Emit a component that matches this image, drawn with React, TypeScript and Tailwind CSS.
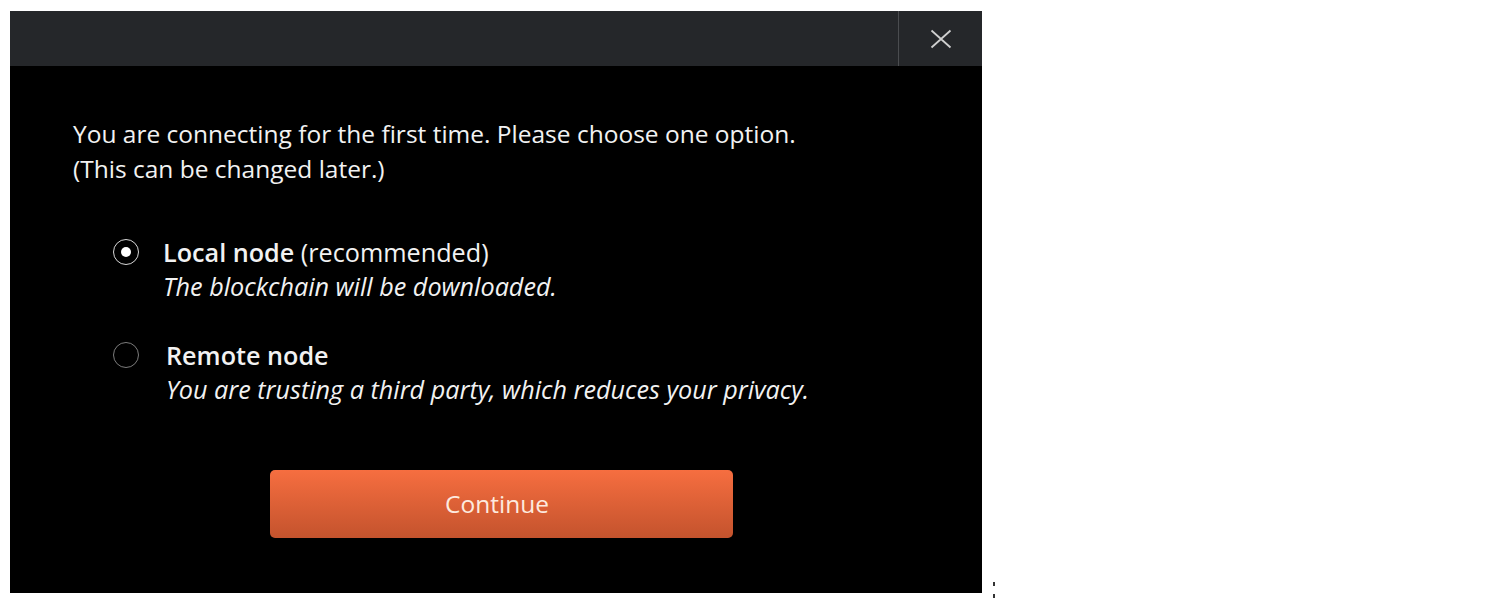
const font = { fontFamily: '"Open Sans", "Noto Sans", sans-serif' };

function Radio({ checked }: { checked: boolean }) {
  return (
    <span
      className={`flex h-[26px] w-[26px] shrink-0 items-center justify-center rounded-full border-[1.5px] ${
        checked ? "border-[#d8d8d8]" : "border-[#7c7c7c]"
      }`}
    >
      {checked && <span className="h-[10px] w-[10px] rounded-full bg-white" />}
    </span>
  );
}

export default function App() {
  return (
    <div className="flex min-h-screen items-start bg-white pl-[10px] pt-[11px]" style={font}>
      {/* Dialog */}
      <div className="flex h-[582px] w-[972px] flex-col bg-black text-[#f2f2f2]">
        {/* Title bar */}
        <div className="flex h-[55px] shrink-0 justify-end bg-[#25272a]">
          <button className="flex w-[84px] items-center justify-center border-l border-[#4a4c4f] text-[#cfcfcf]">
            <svg width="22" height="22" viewBox="0 0 22 22" fill="none" stroke="currentColor" strokeWidth="1.8">
              <path d="M1.5 2.5 L20.5 19.5 M20.5 2.5 L1.5 19.5" />
            </svg>
          </button>
        </div>

        {/* Body */}
        <div className="flex flex-col pl-[63px] pt-[50px]">
          <p className="text-[24.5px] leading-[35px]">
            You are connecting for the first time. Please choose one option.
            <br />
            (This can be changed later.)
          </p>

          <div className="mt-[49px] flex flex-col gap-[35px] pl-[40px] text-[25.2px] leading-[34px]">
            {/* Local node */}
            <div className="flex items-start">
              <span className="flex h-[34px] items-center">
                <Radio checked />
              </span>
              <div className="ml-[24px]">
                <div>
                  <span className="font-semibold">Local node</span> (recommended)
                </div>
                <div className="italic">The blockchain will be downloaded.</div>
              </div>
            </div>

            {/* Remote node */}
            <div className="flex items-start">
              <span className="flex h-[34px] items-center">
                <Radio checked={false} />
              </span>
              <div className="ml-[27px]">
                <div className="font-semibold">Remote node</div>
                <div className="italic">You are trusting a third party, which reduces your privacy.</div>
              </div>
            </div>
          </div>

          <button className="ml-[197px] mt-[64px] flex h-[68px] w-[463px] items-center justify-center rounded-[5px] bg-gradient-to-b from-[#f66e40] to-[#c4532d] pr-[9px] text-[24.5px] text-[#fdeadf]">
            Continue
          </button>
        </div>
      </div>

      {/* stray marks */}
      <div className="ml-[11px] mt-[571px] flex flex-col gap-[8px]">
        <span className="h-[4px] w-[2px] bg-[#333]" />
        <span className="h-[4px] w-[2px] bg-[#333]" />
      </div>
    </div>
  );
}
